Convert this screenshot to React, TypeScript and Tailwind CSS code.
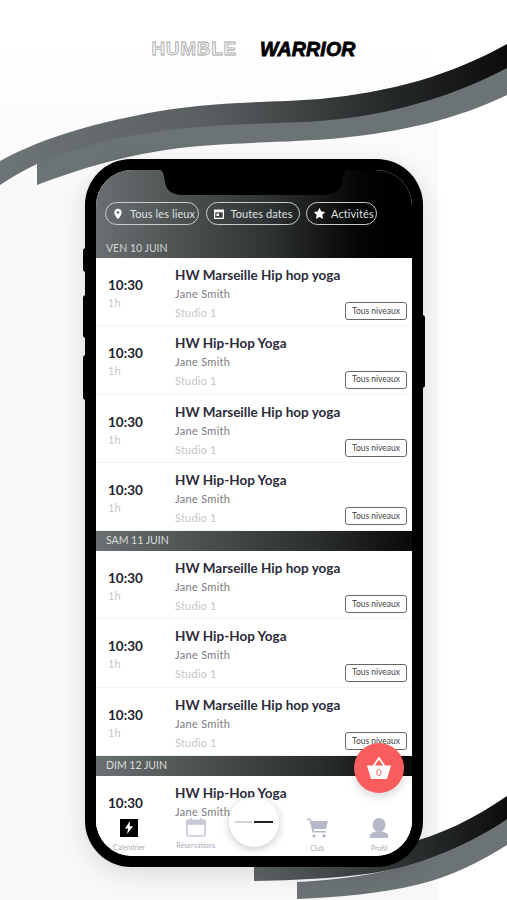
import React from "react";

const titleA = "HW Marseille Hip hop yoga";
const titleB = "HW Hip-Hop Yoga";

function Ribbons() {
  return (
    <svg className="absolute inset-0" width="507" height="900" viewBox="0 0 507 900" fill="none">
      <defs>
        <linearGradient id="back" x1="0" y1="0" x2="507" y2="0" gradientUnits="userSpaceOnUse">
          <stop offset="0" stopColor="#6d7475" />
          <stop offset="0.4" stopColor="#5a6061" />
          <stop offset="0.72" stopColor="#2b2f30" />
          <stop offset="1" stopColor="#0c0c0c" />
        </linearGradient>
        <linearGradient id="backB" x1="254" y1="0" x2="507" y2="0" gradientUnits="userSpaceOnUse">
          <stop offset="0" stopColor="#5f6667" />
          <stop offset="0.55" stopColor="#34393a" />
          <stop offset="1" stopColor="#0c0c0c" />
        </linearGradient>
      </defs>
      <path d="M0 161 C48 135 100 122 160 111 C220 101 270 103 320 99 C390 92 450 76 507 44 L507 72 C450 100 390 118 320 124 L200 136 L37 164 C24 170 12 177 0 185 Z" fill="url(#back)" />
      <path d="M37 164 C90 142 140 131 200 127 C260 122 300 124 340 119 C400 112 455 95 507 68 L507 95 C455 120 400 132 340 138 C300 142 250 142 200 146 C140 151 90 165 37 185 Z" fill="#6c7374" />
      <path d="M254 866 L400 845 C440 836 475 818 507 796 L507 820 C480 838 440 858 400 868 C360 877 310 880 254 881 Z" fill="url(#backB)" />
      <path d="M297 882 C350 879 390 872 425 860 C455 849 485 835 507 819 L507 845 C480 862 450 877 420 884 C380 894 340 897 297 899 Z" fill="#6c7374" />
    </svg>
  );
}

function Pin() {
  return (
    <svg width="12" height="12" viewBox="0 0 24 24" fill="#fff">
      <path d="M12 1.500C7.600 1.500 4.500 4.900 4.500 9c0 5.400 7.500 13.500 7.500 13.500S19.500 14.400 19.500 9c0-4.100-3.100-7.500-7.500-7.500zm0 10.200a2.700 2.700 0 1 1 0-5.400 2.700 2.700 0 0 1 0 5.400z" />
    </svg>
  );
}
function Cal() {
  return (
    <svg width="12" height="12" viewBox="0 0 24 24" fill="#fff">
      <path fillRule="evenodd" d="M2 3h20v19H2zM4.500 8.500v11h15v-11zM7 11h5v5H7z" />
    </svg>
  );
}
function Star() {
  return (
    <svg width="13" height="13" viewBox="0 0 24 24" fill="#fff">
      <path d="M12 1.500l3.300 7 7.200.9-5.300 5 1.400 7.600-6.600-3.700L5.400 22l1.400-7.600-5.300-5 7.200-.9z" />
    </svg>
  );
}

function Chip({ icon, label, w }: { icon: React.ReactNode; label: string; w: string }) {
  return (
    <div className={`flex h-[23px] items-center rounded-full border border-[#c9cccc] pl-[5px] ${w}`}>
      <span className="flex w-[14px] justify-center">{icon}</span>
      <span className="ml-[5px] whitespace-nowrap text-[11px] leading-none tracking-[0.1px] text-[#dfe1e1]">{label}</span>
    </div>
  );
}

function DayHeader({ label, h }: { label: string; h: string }) {
  return (
    <div className={`flex items-center bg-gradient-to-r from-[#6a7071] via-[#2c2f30] via-70% to-[#0a0a0a] pl-[10px] text-[10.500px] text-[#dcdede] ${h}`}>
      {label}
    </div>
  );
}

function Row({ title }: { title: string }) {
  return (
    <div className="relative flex h-[68.300px] border-b border-[#f4f4f4] bg-white pl-[12px]">
      <div className="w-[67px] pt-[18px]">
        <div className="text-[13.500px] font-bold leading-[18px] text-[#23232f]">10:30</div>
        <div className="mt-[1px] text-[11px] leading-[16px] text-[#c8c8c8]">1h</div>
      </div>
      <div className="pt-[8px]">
        <div className="text-[13.500px] font-bold leading-[18px] text-[#2b2b3a]">{title}</div>
        <div className="mt-[1px] text-[11px] leading-[17px] tracking-[0.3px] text-[#7b7b7f]">Jane Smith</div>
        <div className="mt-[2px] text-[11px] leading-[17px] tracking-[0.2px] text-[#c6c6c6]">Studio 1</div>
      </div>
      <div className="absolute bottom-[5px] right-[5px] flex h-[18px] w-[62px] items-center justify-center rounded-[3px] border-[1.500px] border-[#666] text-[8.500px] text-[#444]">
        Tous niveaux
      </div>
    </div>
  );
}

function NavItem({ icon, label, w, lift }: { icon: React.ReactNode; label: string; w: string; lift?: string }) {
  return (
    <div className={`flex flex-col items-center ${w}`}>
      <div className="flex h-[19px] items-center justify-center">{icon}</div>
      <div className={`text-[7px] leading-[9px] text-[#a9acb6] ${lift ?? "mt-[6px]"}`}>{label}</div>
    </div>
  );
}

export default function App() {
  return (
    <div className="relative h-[900px] w-[507px] overflow-hidden bg-white [font-family:Lato,sans-serif]">
      <div className="absolute bottom-0 left-0 top-[40px] w-[438px] rounded-tr-[40px] bg-gradient-to-b from-[#ffffff] to-[#f8f8f8] to-[20%]" />
      <Ribbons />
      <div className="relative flex flex-col items-start">
        <div className="flex h-[159px] w-full justify-center gap-[23px] pt-[38px] [font-family:'Liberation_Sans',sans-serif]">
          <span className="text-[19px] font-bold leading-[22px] tracking-[0.7px] text-[#f4f4f4] [-webkit-text-stroke:0.8px_#a8a8a8]">HUMBLE</span>
          <span className="text-[19.500px] font-bold italic leading-[22px] tracking-[0.2px] text-black [-webkit-text-stroke:0.8px_#000]">WARRIOR</span>
        </div>
        <div className="relative ml-[85px] h-[708px] w-[338px] rounded-[46px] bg-black p-[11px] shadow-[0_6px_24px_rgba(0,0,0,0.12)]">
          <div className="absolute left-[-2px] top-[89px] h-[24px] w-[3px] rounded-l bg-black" />
          <div className="absolute left-[-2px] top-[136px] h-[43px] w-[3px] rounded-l bg-black" />
          <div className="absolute left-[-2px] top-[196px] h-[45px] w-[3px] rounded-l bg-black" />
          <div className="absolute right-[-2px] top-[156px] h-[73px] w-[3px] rounded-r bg-black" />
          <div className="relative h-[686px] w-[316px] overflow-hidden rounded-[36px] bg-white">
            <div className="h-[88px] bg-gradient-to-r from-[#6a7071] via-[#303334] via-55% to-[#000] pb-[3px] pl-[9px] pt-[32px]">
              <div className="flex gap-[6.500px]">
                <Chip icon={<Pin />} label="Tous les lieux" w="w-[94px]" />
                <Chip icon={<Cal />} label="Toutes dates" w="w-[94px]" />
                <Chip icon={<Star />} label="Activités" w="w-[71px]" />
              </div>
              <div className="ml-[1px] mt-[16px] text-[10.500px] leading-[14px] text-[#d2d5d5]">VEN 10 JUIN</div>
            </div>
            <Row title={titleA} />
            <Row title={titleB} />
            <Row title={titleA} />
            <Row title={titleB} />
            <DayHeader label="SAM 11 JUIN" h="h-[20px]" />
            <Row title={titleA} />
            <Row title={titleB} />
            <Row title={titleA} />
            <DayHeader label="DIM 12 JUIN" h="h-[20px]" />
            <Row title={titleB} />

            <svg className="absolute left-[64px] top-0" width="188" height="26" viewBox="0 0 188 26" fill="#000">
              <path d="M0 0C3 0 4 5 5 12C6 20 12 25 22 25H164C174 25 181 20 182 12C183 5 185 0 188 0Z" />
            </svg>

            <div className="absolute bottom-0 left-0 right-0 flex h-[40px] bg-white pt-[2px]">
              <NavItem
                w="w-[66px]"
                label="Calendrier"
                icon={
                  <div className="flex h-[18px] w-[18px] items-center justify-center bg-black">
                    <svg width="10" height="13" viewBox="0 0 10 13" fill="#fff"><path d="M6 0L1 7.500h3L3.200 13 9 5.300H5.700z" /></svg>
                  </div>
                }
              />
              <NavItem
                w="w-[68px]"
                label="Réservations"
                lift="mt-[4px]"
                icon={
                  <svg width="20" height="19" viewBox="0 0 20 19" fill="none" stroke="#c6c9d6" strokeWidth="1.600">
                    <rect x="1" y="2.500" width="18" height="15.500" rx="1" />
                    <rect x="1" y="2.500" width="18" height="3.500" fill="#c6c9d6" />
                    <path d="M5 0v3M15 0v3" />
                  </svg>
                }
              />
              <div className="w-[54px]" />
              <NavItem
                w="w-[66px]"
                label="Club"
                lift="mt-[7px]"
                icon={
                  <svg width="21" height="20" viewBox="0 0 21 20" fill="#b6bac8">
                    <path d="M0 0.500h3.500l1 2.500H21l-2 8H6.500l.5 2h12v1.500H5.500L2.500 2H0z" />
                    <circle cx="7" cy="18" r="1.700" />
                    <circle cx="17" cy="18" r="1.700" />
                  </svg>
                }
              />
              <NavItem
                w="w-[58px]"
                label="Profil"
                lift="mt-[7px]"
                icon={
                  <svg width="18" height="20" viewBox="0 0 18 20" fill="#b6bac8">
                    <ellipse cx="9" cy="7" rx="6.500" ry="7" />
                    <path d="M0 20v-2.500c0-2 3-3.500 6-4h6c3 .5 6 2 6 4V20z" />
                  </svg>
                }
              />
            </div>

            <div className="absolute bottom-[9px] left-[133px] flex h-[50px] w-[50px] items-center justify-center gap-[2px] rounded-full bg-white shadow-[0_2px_8px_rgba(0,0,0,0.22)]">
              <div className="h-[1.500px] w-[17px] bg-[#d4d4d4]" />
              <div className="h-[2px] w-[19px] bg-[#222]" />
            </div>
            <div className="absolute left-[258px] top-[573px] flex h-[50px] w-[50px] items-center justify-center rounded-full bg-[#f85c5c] shadow-[0_4px_10px_rgba(0,0,0,0.15)]">
              <div className="relative flex h-[24px] w-[26px] justify-center">
                <svg className="absolute inset-0" width="26" height="24" viewBox="0 0 26 24" fill="none">
                  <path d="M7.500 10L13 2l5.500 8" stroke="#fff" strokeWidth="1.800" />
                  <path d="M1 9.500h24L21 23H5z" fill="#fff" />
                </svg>
                <span className="relative mt-[10px] text-[10px] font-bold leading-[12px] text-[#f58a8a]">0</span>
              </div>
            </div>
          </div>
        </div>
      </div>
    </div>
  );
}
